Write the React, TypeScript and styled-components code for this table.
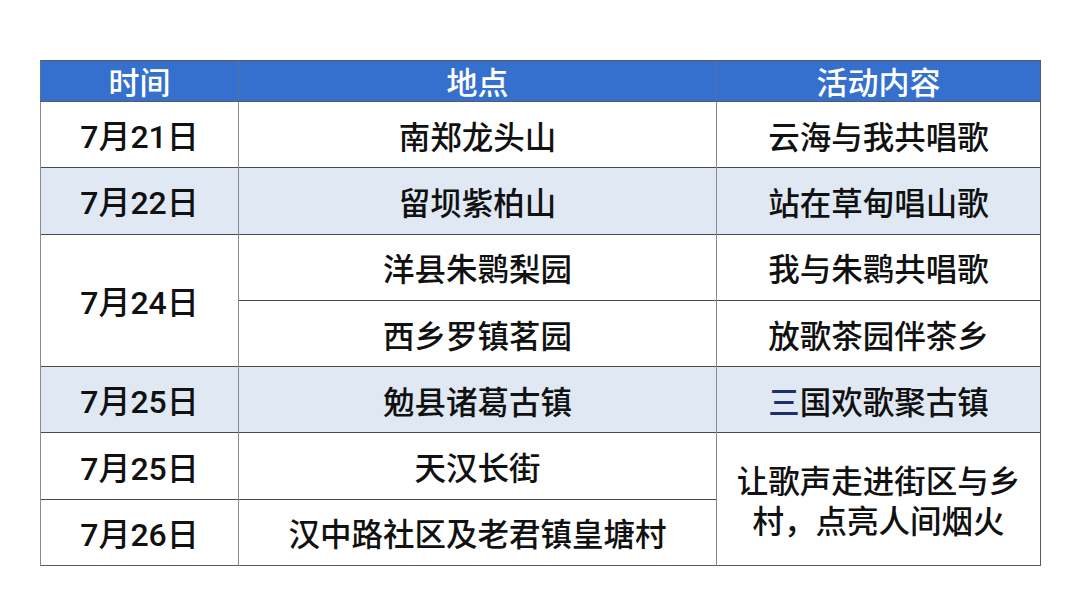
import React from "react";
import styled, { createGlobalStyle } from "styled-components";

const GlobalStyle = createGlobalStyle`
  html, body {
    margin: 0;
    padding: 0;
    background: #ffffff;
  }
  body {
    font-family: "Noto Sans CJK SC", "Noto Sans", sans-serif;
  }
`;

const Page = styled.div`
  width: 1080px;
  height: 606px;
  padding: 60px 40px 0;
  box-sizing: border-box;
`;

const Table = styled.table`
  width: 1000px;
  border-collapse: collapse;
  table-layout: fixed;
  border: 1px solid #5a5a5a;
`;

const HeadCell = styled.th`
  height: 40px;
  padding: 0;
  background: #3670cf;
  color: #ffffff;
  font-size: 31px;
  font-weight: 500;
  line-height: 40px;
  text-align: center;
  border-left: 1px solid #5a6f99;
  border-bottom: 1px solid #5a5a5a;
`;

const Row = styled.tr<{ $shade?: boolean }>`
  background: ${(p) => (p.$shade ? "#dfe8f3" : "#ffffff")};
`;

const Cell = styled.td`
  height: 65.3px;
  padding: 0;
  text-align: center;
  vertical-align: middle;
  color: #111111;
  font-size: 31.5px;
  font-weight: 500;
  line-height: 40px;
  border-top: 1px solid #4a4a4a;
  border-left: 1px solid #8a8a8a;
  background: inherit;
`;

const DateText = styled.span`
  display: inline-block;
  padding-top: 5px;
  font-family: Roboto, "Noto Sans CJK SC", sans-serif;
  font-size: 32px;
  line-height: 36px;
`;

const Mark = styled.span`
  color: #1e2f6e;
`;

const Wrap = styled.div`
  width: 290px;
  margin: 0 auto;
`;

export default function App() {
  return (
    <>
      <GlobalStyle />
      <Page>
        <Table>
          <colgroup>
            <col style={{ width: 198 }} />
            <col style={{ width: 478 }} />
            <col style={{ width: 324 }} />
          </colgroup>
          <thead>
            <tr>
              <HeadCell>时间</HeadCell>
              <HeadCell>地点</HeadCell>
              <HeadCell>活动内容</HeadCell>
            </tr>
          </thead>
          <tbody>
            <Row>
              <Cell><DateText>7月21日</DateText></Cell>
              <Cell>南郑龙头山</Cell>
              <Cell>云海与我共唱歌</Cell>
            </Row>
            <Row $shade>
              <Cell><DateText>7月22日</DateText></Cell>
              <Cell>留坝紫柏山</Cell>
              <Cell>站在草甸唱山歌</Cell>
            </Row>
            <Row>
              <Cell rowSpan={2}><DateText>7月24日</DateText></Cell>
              <Cell>洋县朱鹮梨园</Cell>
              <Cell>我与朱鹮共唱歌</Cell>
            </Row>
            <Row>
              <Cell>西乡罗镇茗园</Cell>
              <Cell>放歌茶园伴茶乡</Cell>
            </Row>
            <Row $shade>
              <Cell><DateText>7月25日</DateText></Cell>
              <Cell>勉县诸葛古镇</Cell>
              <Cell>
                <Mark>三</Mark>国欢歌聚古镇
              </Cell>
            </Row>
            <Row>
              <Cell><DateText>7月25日</DateText></Cell>
              <Cell>天汉长街</Cell>
              <Cell rowSpan={2}>
                <Wrap>让歌声走进街区与乡村，点亮人间烟火</Wrap>
              </Cell>
            </Row>
            <Row>
              <Cell><DateText>7月26日</DateText></Cell>
              <Cell>汉中路社区及老君镇皇塘村</Cell>
            </Row>
          </tbody>
        </Table>
      </Page>
    </>
  );
}
